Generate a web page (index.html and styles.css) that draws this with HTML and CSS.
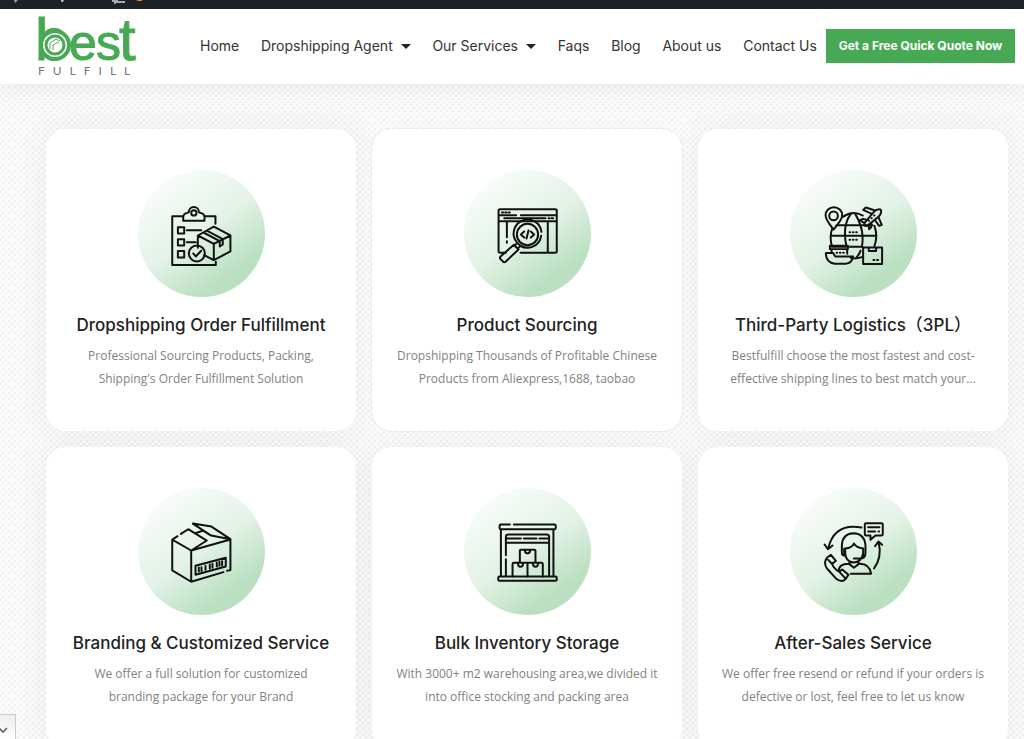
FILE: index.html
```html
<!DOCTYPE html>
<html lang="en">
<head>
<meta charset="utf-8">
<meta name="viewport" content="width=device-width, initial-scale=1">
<title>Best Fulfill - Services</title>
<link rel="stylesheet" href="styles.css">
</head>
<body>
<div class="admin-bar" aria-hidden="true">
  <svg width="160" height="9" viewBox="0 0 160 9"><g transform="translate(0 6)">
    <path d="M14-6h4l-3 3z" fill="#8fa5bd"/><path d="M61-6h3l-1 2h-2z" fill="#aabdd8"/>
    <path d="M112-5h5v1h8M114-3l2 0" stroke="#a7aaad" stroke-width="2" fill="none"/><path d="M136-6h7l-2 1h-3z" fill="#e08a32"/></g></svg>
</div>
<header class="site-header">
  <a class="logo" href="#" aria-label="Best Fulfill home">
    <svg width="98" height="62" viewBox="0 0 98 62">
      <text class="logo-word" y="45"><tspan class="tall" x="-3">b</tspan><tspan x="31">e</tspan><tspan x="58">s</tspan><tspan class="tall" x="81">t</tspan></text>
      <circle cx="17" cy="30" r="14" fill="#fff" stroke="#48a954" stroke-width="4"/>
      <circle cx="17" cy="30" r="9" fill="#fff" stroke="#48a954" stroke-width="3"/>
      <path d="M12 28l6-4 4 2M12 28v6M15 35v-5l6-3" fill="none" stroke="#48a954"/>
      <text class="logo-sub" x="0" y="60">FULFILL</text>
    </svg>
  </a>
  <nav class="nav" aria-label="Main">
    <a href="#">Home</a>
    <a href="#">Dropshipping Agent <span class="caret"></span></a>
    <a href="#">Our Services <span class="caret"></span></a>
    <a href="#">Faqs</a>
    <a href="#">Blog</a>
    <a href="#">About us</a>
    <a href="#">Contact Us</a>
  </nav>
  <a class="quote" href="#">Get a Free Quick Quote Now</a>
</header>
<main class="services">
  <article class="card">
    <svg class="icon" viewBox="22 28 382 382">
      <path d="M158 167H125V314H256V304M221 167H255V190M158 181v-12q1-10 13-12l4-3a15 15 0 0 1 30 0l4 3q12 2 13 12v12z"/>
      <circle cx="190" cy="157" r="8"/>
      <path d="M142 200h19v19h-19zM142 236h19v19h-19zM142 272h19v19h-19zM169 209h43M169 245h27"/>
      <path d="M202 262V225L250 198L300 225V273L250 299L221 284M202 225L250 250L300 225M250 250V299M219 216L268 242V258L277 252V236L229 210"/>
      <circle cx="199" cy="279" r="24"/><path d="M188 279l8 9 16-17"/>
    </svg>
    <h2>Dropshipping Order Fulfillment</h2>
    <p>Professional Sourcing Products, Packing, Shipping's Order Fulfillment Solution</p>
  </article>
  <article class="card active">
    <svg class="icon" viewBox="22 28 382 382">
      <path d="M148 277H130Q126 277 126 272V150Q126 146 131 146H296Q301 146 301 150V273Q301 277 297 277H192M126 164H179M193 164H301M126 182H301M143 173H267M151 182V230M151 242V247M274 182V277"/>
      <path d="M136 156h4M146 156h4M156 156h4M276 173h4M286 173h4"/>
      <path d="M248 243A42 42 0 1 1 255 214M254 226A42 42 0 0 1 191 256"/><circle cx="213" cy="222" r="32"/>
      <path d="M203 213l-10 9 10 9M223 213l10 9-10 9M216 210l-6 24M182 248l-9 9M191 257l-8 8M172 253l14 14-39 37q-4 3-8-1l-7-7q-4-4 0-8z"/>
    </svg>
    <h2>Product Sourcing</h2>
    <p>Dropshipping Thousands of Profitable Chinese Products from Aliexpress,1688, taobao</p>
  </article>
  <article class="card">
    <svg class="icon" viewBox="22 28 382 382">
      <path d="M181 169Q211 148 241 165M276 196Q287 226 276 257M148 257Q140 229 149 204M145 226H282M162 194H270M148 259H240M205 292Q217 297 238 290M205 160Q178 196 192 258M218 160Q248 208 238 260M222 291q8-9 12-20"/>
      <path d="M153 207Q129 177 129 164a25 24 0 0 1 50 0Q179 177 153 207z"/><circle cx="153" cy="166" r="13"/>
      <path d="M247 186L275 153Q286 143 295 147Q299 157 289 168L258 193Q242 202 247 186zM268 160l-26-12 8-7 28 9M288 170l10 23-8 3-12-17M246 188l-14-9 10-4 12 3M258 192l2 14 6-6 1-14M259 181h1M267 173h1M275 165h1"/>
      <path d="M201 215h2M211 215h2M221 215h2M201 238h2M211 238h2M221 238h2M142 256h54v10h-54zM147 267v10M194 267v13M130 278h22l6 10h54Q208 310 189 310H157Q129 306 130 278zM162 277h2M172 277h2M182 277h2"/>
      <path d="M242 261h57v50h-57zM259 261v11h22v-11M273 299h3M284 299h3"/>
    </svg>
    <h2>Third-Party Logistics（3PL）</h2>
    <p>Bestfulfill choose the most fastest and cost-effective shipping lines to best match your...</p>
  </article>
  <article class="card">
    <svg class="icon" viewBox="22 23 382 382">
      <path d="M141 168L125 178V271L182 305L279 276M290 272L300 270V178L182 211V305M125 178L182 211L229 181L173 147L151 161M187 130L243 139L300 177L242 166L187 130M194 159L219 151M218 151L242 166M182 211L229 181"/>
      <path d="M195 257L286 233V259L195 284zM205 262v12M213 261v12M225 257v12M238 253v12M246 251v12M259 247v12M267 245v12M275 243v12"/>
    </svg>
    <h2>Branding &amp; Customized Service</h2>
    <p>We offer a full solution for customized branding package for your Brand</p>
  </article>
  <article class="card">
    <svg class="icon" viewBox="22 23 382 382">
      <path d="M160 133H133q-4 0-4 4v6q0 4 4 4H294q4 0 4-4v-6q0-4-4-4H172M133 147V289M291 147V289M148 289V237M148 225V170Q148 163 156 163H270Q278 163 278 170V289M148 175H193M202 175H240M249 175H278M148 188H278M129 289H297q4 0 4 4v5q0 4-4 4H129q-4 0-4-4v-5q0-4 4-4z"/>
      <path d="M190 247v-35q0-3 3-3h41q3 0 3 3v35M205 209q0 11 8 11t8-11M168 289v-37q0-4 4-4h83q4 0 4 4v37M213 248v41M184 248q0 12 8 12t8-12M229 248q0 12 8 12t8-12"/>
    </svg>
    <h2>Bulk Inventory Storage</h2>
    <p>With 3000+ m2 warehousing area,we divided it into office stocking and packing area</p>
  </article>
  <article class="card">
    <svg class="icon" viewBox="22 23 382 382">
      <path d="M237 142Q155 127 137 205M126 193l10 14 14-11M275 265Q299 232 289 187M278 198l10-14 11 10"/>
      <path d="M247 133q0-4 4-4h46q4 0 4 4v29q0 4-4 4h-18l-15 13v-13h-13q-4 0-4-4zM257 141h34M257 154h21M288 154h2"/>
      <path d="M185 226q-7 0-7-10V195Q180 160 213 159Q246 160 249 195V219Q249 235 232 235H214M188 205Q209 203 214 190Q222 203 242 205V215M188 205V216Q188 245 214 247Q237 245 242 220M185 206v20M242 206v20M201 244v8l13 11 14-11v-8M199 251Q168 251 169 273M228 251Q261 249 266 281H205"/>
      <path d="M133 233l12-9 15 18-11 9Q151 263 170 275l9-7 19 16-9 13Q178 309 160 295L134 266Q121 249 133 233zM137 239l13 14M171 276l17 18"/>
    </svg>
    <h2>After-Sales Service</h2>
    <p>We offer free resend or refund if your orders is defective or lost, feel free to let us know</p>
  </article>
</main>
<button class="corner" aria-label="Expand"><svg width="10" height="6" viewBox="0 0 10 6"><path d="M1 1l4 4 4-4" fill="none" stroke="#555" stroke-width="1.5"/></svg></button>
</body>
</html>
```
FILE: styles.css
```css
* { box-sizing: border-box; }
html, body { height: 100%; }
body {
  margin: 0;
  overflow: hidden;
  font-family: Inter, "Noto Sans CJK SC", sans-serif;
  background-color: #fdfdfd;
  background-image: radial-gradient(circle, #f0f0f0 1px, transparent 2px), radial-gradient(circle, #f0f0f0 1px, transparent 2px);
  background-size: 6px 6px;
  background-position: 0 0, 3px 3px;
}
a { color: inherit; text-decoration: none; }
.admin-bar { height: 9px; background: #1d2327; }
.admin-bar svg { display: block; }
.site-header {
  display: flex;
  align-items: center;
  height: 75px;
  padding: 0 9px 2px 38px;
  background: #fff;
  box-shadow: 0 0 24px rgba(0, 0, 0, 0.08);
}
.logo { flex: none; display: block; }
.logo svg { display: block; overflow: visible; }
.logo-word { font-family: "Liberation Sans", sans-serif; font-size: 50px; fill: #48a954; stroke: #48a954; stroke-width: 1px; }
.logo-word .tall { font-size: 60px; }
.logo-sub { font-family: Lato, sans-serif; font-size: 12px; letter-spacing: 8px; fill: #777; }
.nav {
  flex: 1;
  display: flex;
  justify-content: space-between;
  margin: 0 9px 0 64px;
  font-size: 14px;
  line-height: 20px;
  color: #333;
  white-space: nowrap;
}
.caret {
  display: inline-block;
  margin-left: 4px;
  border: 5px solid transparent;
  border-top-color: #222;
  border-bottom: 0;
  vertical-align: middle;
}
.quote {
  flex: none;
  width: 189px;
  background: #48a954;
  color: #fff;
  font-size: 12px;
  font-weight: 700;
  line-height: 34px;
  text-align: center;
  white-space: nowrap;
}
.services {
  display: grid;
  grid-template-columns: repeat(3, 1fr);
  gap: 16px;
  padding: 45px 16px 16px 46px;
}
.card {
  display: flex;
  flex-direction: column;
  align-items: center;
  padding: 41px 16px;
  border-radius: 20px;
  background: #fff;
  box-shadow: 0 0 30px rgba(0, 0, 0, 0.05);
  text-align: center;
}
.card.active { box-shadow: 0 0 2px rgba(72, 169, 84, 0.3); }
.icon {
  width: 127px;
  height: 127px;
  border-radius: 50%;
  background: linear-gradient(145deg, #fafdfb 10%, #e3f2e6 50%, #bae0c1 78%);
  fill: none;
  stroke: #111;
  stroke-width: 6;
  stroke-linecap: round;
  stroke-linejoin: round;
}
.card h2 {
  margin: 14px 0 5px;
  font-size: 17px;
  font-weight: 500;
  line-height: 28px;
  color: #222;
  white-space: nowrap;
}
.card p {
  max-width: 264px;
  margin: 0;
  font-family: "Open Sans", sans-serif;
  font-size: 12px;
  line-height: 23px;
  color: #7f7f7f;
}
.corner {
  position: fixed;
  left: -10px;
  bottom: -3px;
  width: 26px;
  height: 28px;
  padding: 0;
  border: 1px solid #ccc;
  background: linear-gradient(#eee, #fff);
}
```
